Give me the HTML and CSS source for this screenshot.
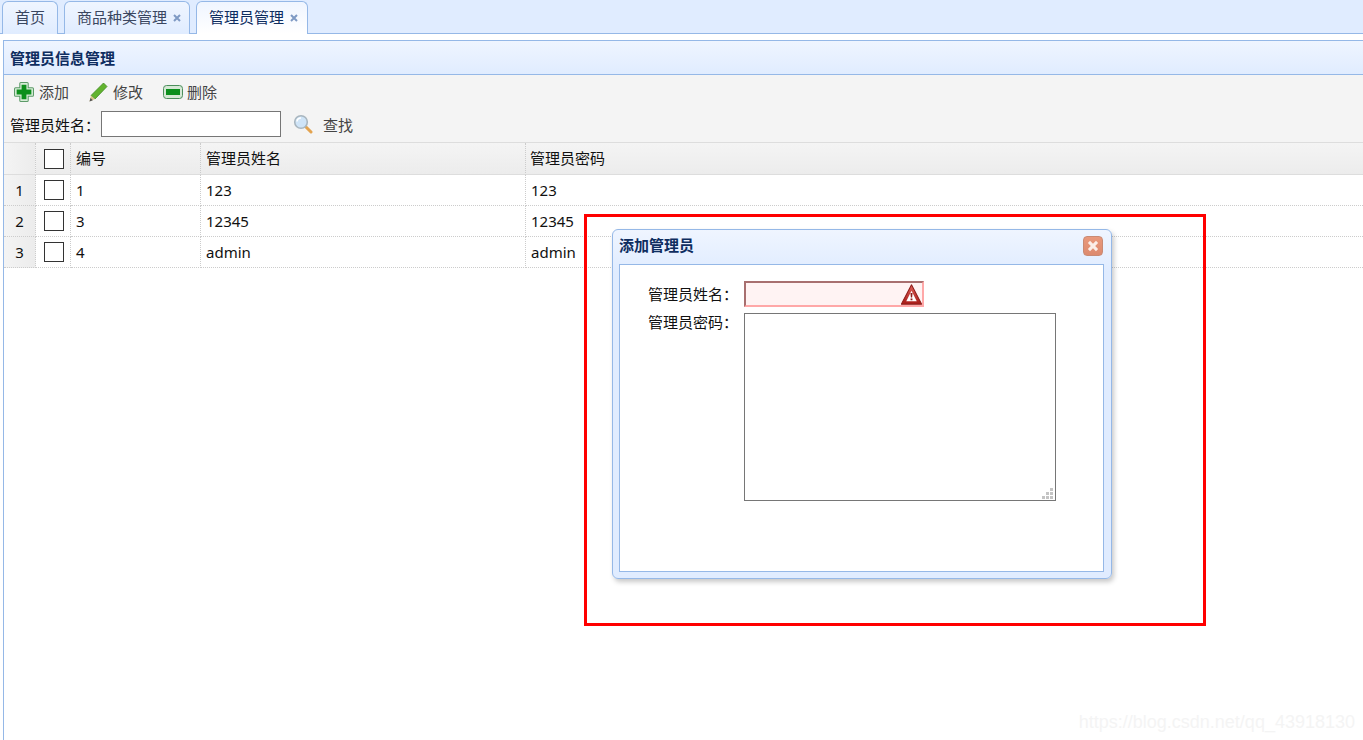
FILE: index.html
```html
<!DOCTYPE html>
<html lang="zh">
<head>
<meta charset="utf-8">
<title>管理员信息管理</title>
<link rel="stylesheet" href="styles.css">
</head>
<body>
<div class="tabs">
  <div class="tab tab-home">首页</div>
  <div class="tab tab-goods">商品种类管理<svg class="tab-x" viewBox="0 0 8 8"><path d="M1 1l6 6M7 1L1 7" stroke="#7f9ac4" stroke-width="2"/></svg></div>
  <div class="tab tab-admin">管理员管理<svg class="tab-x" viewBox="0 0 8 8"><path d="M1 1l6 6M7 1L1 7" stroke="#7f9ac4" stroke-width="2"/></svg></div>
</div>
<div class="panel">
  <div class="panel-head">管理员信息管理</div>
  <div class="toolbar">
    <div class="tool-row">
      <a class="tool tool-add">
        <svg class="ico" viewBox="0.5 0.5 19 19"><path d="M7 1h6a1 1 0 0 1 1 1v4h4a1 1 0 0 1 1 1v6a1 1 0 0 1-1 1h-4v4a1 1 0 0 1-1 1H7a1 1 0 0 1-1-1v-4H2a1 1 0 0 1-1-1V7a1 1 0 0 1 1-1h4V2a1 1 0 0 1 1-1z" fill="#d8ecd8" stroke="#5c9a68"/><path d="M7.7 3h4.6v4.7H17v4.6h-4.7V17H7.7v-4.7H3V7.7h4.7z" fill="#0d8f1c"/></svg>添加</a>
      <a class="tool tool-edit">
        <svg class="ico ico-edit" viewBox="2 0 18 20"><path d="M15.5 1l3.5 3.5L7 17 3 13.5z" fill="#62b32e" stroke="#3f8a22" stroke-width=".8"/><path d="M3 13.5L7 17l-5.5 2.5z" fill="#d8c48a"/><path d="M1.5 19.5l1-3.6 2.4 2.3z" fill="#555"/></svg>修改</a>
      <a class="tool tool-del">
        <svg class="ico ico-del" viewBox="0 0 20 14"><rect x=".5" y=".5" width="19" height="13" rx="3" fill="#d5e8d5" stroke="#4c8f5c"/><rect x="3" y="4" width="14" height="6" fill="#0b8f1c"/></svg>删除</a>
    </div>
    <div class="search-row">
      <label class="search-label">管理员姓名：</label>
      <input class="search-input" type="text">
      <a class="search-btn">
        <svg class="ico-search" viewBox="0 0 20 20"><path d="M12.5 12.5l5.5 5.5" stroke="#e3a34f" stroke-width="3" stroke-linecap="round"/><circle cx="8" cy="8" r="6.3" fill="#cfe4f7" stroke="#a9b6bf" stroke-width="1.6"/><path d="M4 7.5a4 4 0 0 1 4-3.5" stroke="#fff" stroke-width="1.6" fill="none"/></svg>查找</a>
    </div>
  </div>
  <table class="grid">
    <colgroup><col class="c-num"><col class="c-check"><col class="c-id"><col class="c-name"><col></colgroup>
    <thead>
      <tr><th class="num"></th><th class="check"><input type="checkbox" class="box"></th><th>编号</th><th>管理员姓名</th><th class="pw">管理员密码</th></tr>
    </thead>
    <tbody>
      <tr><td class="num">1</td><td class="check"><input type="checkbox" class="box"></td><td>1</td><td>123</td><td>123</td></tr>
      <tr><td class="num">2</td><td class="check"><input type="checkbox" class="box"></td><td>3</td><td>12345</td><td>12345</td></tr>
      <tr><td class="num">3</td><td class="check"><input type="checkbox" class="box"></td><td>4</td><td>admin</td><td>admin</td></tr>
    </tbody>
  </table>
</div>

<div class="dialog">
  <div class="dialog-head">
    <span class="dialog-title">添加管理员</span>
    <span class="dialog-close"><svg viewBox="0 0 20 20"><path d="M5.5 5.5l9 9M14.5 5.5l-9 9" stroke="#fbeee8" stroke-width="3.4"/></svg></span>
  </div>
  <div class="dialog-body">
    <div class="form-row form-row-name">
      <label class="form-label">管理员姓名：</label>
      <div class="invalid">
        <svg class="warn" viewBox="0 0 20 20"><defs><linearGradient id="warnfill" x1="0" y1="0" x2="0" y2="1"><stop offset="0" stop-color="#e0605a"/><stop offset="1" stop-color="#a81c18"/></linearGradient></defs><path d="M10 .8L19.7 19.2H.3z" fill="url(#warnfill)" stroke="#8f1d1a" stroke-linejoin="round"/><path d="M10 6.5L15 16.5H5z" fill="#fff"/><path d="M9 8.5h2l-.4 4.4H9.4zM9.1 13.7h1.8v1.8H9.1z" fill="#8f1d1a"/></svg>
      </div>
    </div>
    <div class="form-row">
      <label class="form-label form-label-area">管理员密码：</label>
      <div class="area-wrap">
        <textarea class="form-area"></textarea>
        <svg class="grip" viewBox="0 0 11 11"><path d="M8 0h3v3H8zM4 4h3v3H4zM8 4h3v3H8zM0 8h3v3H0zM4 8h3v3H4zM8 8h3v3H8z" fill="#c4c4c4"/></svg>
      </div>
    </div>
  </div>
</div>

<div class="annotation"></div>
<div class="watermark">https://blog.csdn.net/qq_43918130</div>
</body>
</html>
```

FILE: styles.css
```css
* { box-sizing: border-box; }
html, body { margin: 0; height: 740px; overflow: hidden; background: #fff; }
body { position: relative; font: 15px/20px "Noto Sans", "Noto Sans CJK SC", sans-serif; color: #111; }

.tabs { height: 34px; padding: 1px 0 0 2px; display: flex; gap: 6px; background: #e0ecff; border-bottom: 1px solid #95b8e7; }
.tab { height: 33px; padding: 0 12px; line-height: 31px; color: #3a4660; border: 1px solid #95b8e7; border-bottom: 0; border-radius: 6px 6px 0 0; background: linear-gradient(#eff5ff, #e0ecff); white-space: nowrap; }
.tab-home { width: 56px; }
.tab-goods { width: 126px; }
.tab-admin { width: 112px; height: 33px; background: linear-gradient(#eff5ff, #fff); color: #0e2d5f; position: relative; z-index: 1; }
.tab-x { display: inline-block; width: 8px; height: 8px; margin-left: 6px; vertical-align: 1px; }

.panel { margin: 6px 0 0 3px; height: 700px; border-left: 1px solid #95b8e7; }
.panel-head { height: 35px; padding-left: 6px; line-height: 35px; font-weight: 700; color: #0e2d5f; border-top: 1px solid #95b8e7; border-bottom: 1px solid #95b8e7; background: linear-gradient(#eff5ff, #e0ecff); }

.toolbar { height: 68px; background: #f4f4f4; border-bottom: 1px solid #ddd; }
.tool-row { height: 34px; padding-left: 10px; display: flex; align-items: center; }
.tool { display: flex; align-items: center; color: #444; }
.tool-add { width: 75px; }
.tool-edit { width: 74px; }
.ico { width: 20px; height: 20px; margin-right: 5px; flex: none; }
.ico-edit { margin-right: 4px; }
.ico-del { height: 14px; margin-right: 4px; }
.search-row { height: 26px; margin-top: 2px; padding-left: 6px; display: flex; align-items: center; }
.search-label { width: 91px; color: #111; margin-top: 2px; }
.search-input { width: 180px; height: 26px; border: 1px solid #767676; background: #fff; padding: 0 2px; }
.search-btn { display: flex; align-items: center; margin: 2px 0 0 12px; color: #444; }
.ico-search { width: 20px; height: 20px; margin: -2px 10px 0 0; }

.grid { width: 1359px; border-collapse: separate; border-spacing: 0; table-layout: fixed; }
.c-num { width: 32px; }
.c-check { width: 35px; }
.c-id { width: 130px; }
.c-name { width: 325px; }
.grid th { height: 32px; font-weight: 400; text-align: left; padding: 0 5px 2px; background: linear-gradient(#f4f4f4, #ececec); border-right: 1px dotted #ccc; border-bottom: 1px solid #ddd; }
.grid th.pw { padding-left: 4px; }
.grid td { height: 31px; padding: 0 5px; border-right: 1px dotted #ccc; border-bottom: 1px dotted #ccc; background: #fff; }
.grid tr > :last-child { border-right: 0; }
.grid .num { text-align: center; padding: 0; background: linear-gradient(90deg, #f4f4f4, #ececec); }
.grid .check { padding: 0 0 0 8px; }
.box { appearance: none; display: block; width: 20px; height: 20px; margin: 0; background: #fff; border: 1px solid #333; border-radius: 0; }

.dialog { position: absolute; left: 612px; top: 229px; width: 500px; height: 350px; padding: 0 7px 6px 6px; border: 1px solid #95b8e7; border-radius: 6px; background: linear-gradient(#eff5ff, #e0ecff 12%); box-shadow: 2px 3px 5px rgba(0, 0, 0, .22); }
.dialog-head { height: 34px; display: flex; align-items: flex-start; justify-content: space-between; }
.dialog-title { font-weight: 700; color: #0e2d5f; margin-top: 5px; }
.dialog-close { width: 20px; height: 20px; margin: 6px 1px 0 0; border-radius: 4px; background: linear-gradient(#e9997c, #dd8a6e); border: 1px solid #c98a74; display: block; }
.dialog-close svg { display: block; width: 18px; height: 18px; }
.dialog-body { height: 308px; padding: 16px 0 0 124px; background: #fff; border: 1px solid #95b8e7; }
.form-row { display: flex; align-items: flex-start; }
.form-row-name { margin-bottom: 6px; }
.form-label { width: 95px; margin: 3px 1px 0 -96px; white-space: nowrap; }
.form-label-area { margin-top: -1px; }
.invalid { width: 180px; height: 26px; display: flex; align-items: center; justify-content: flex-end; background: #fff3f3; border: 2px solid #ffa8a8; border-top-color: #a86f6f; border-left-color: #a86f6f; }
.warn { width: 21px; height: 21px; flex: none; }
.area-wrap { position: relative; width: 312px; height: 188px; }
.form-area { width: 100%; height: 100%; margin: 0; border: 1px solid #767676; background: #fff; display: block; resize: none; }
.grip { position: absolute; right: 3px; bottom: 2px; width: 11px; height: 11px; }

.annotation { position: absolute; left: 584px; top: 214px; width: 622px; height: 412px; border: 3px solid #f00; pointer-events: none; }
.watermark { position: absolute; right: 8px; top: 711px; font: 18px/22px "Liberation Sans", sans-serif; color: #f4f4f4; }
```
